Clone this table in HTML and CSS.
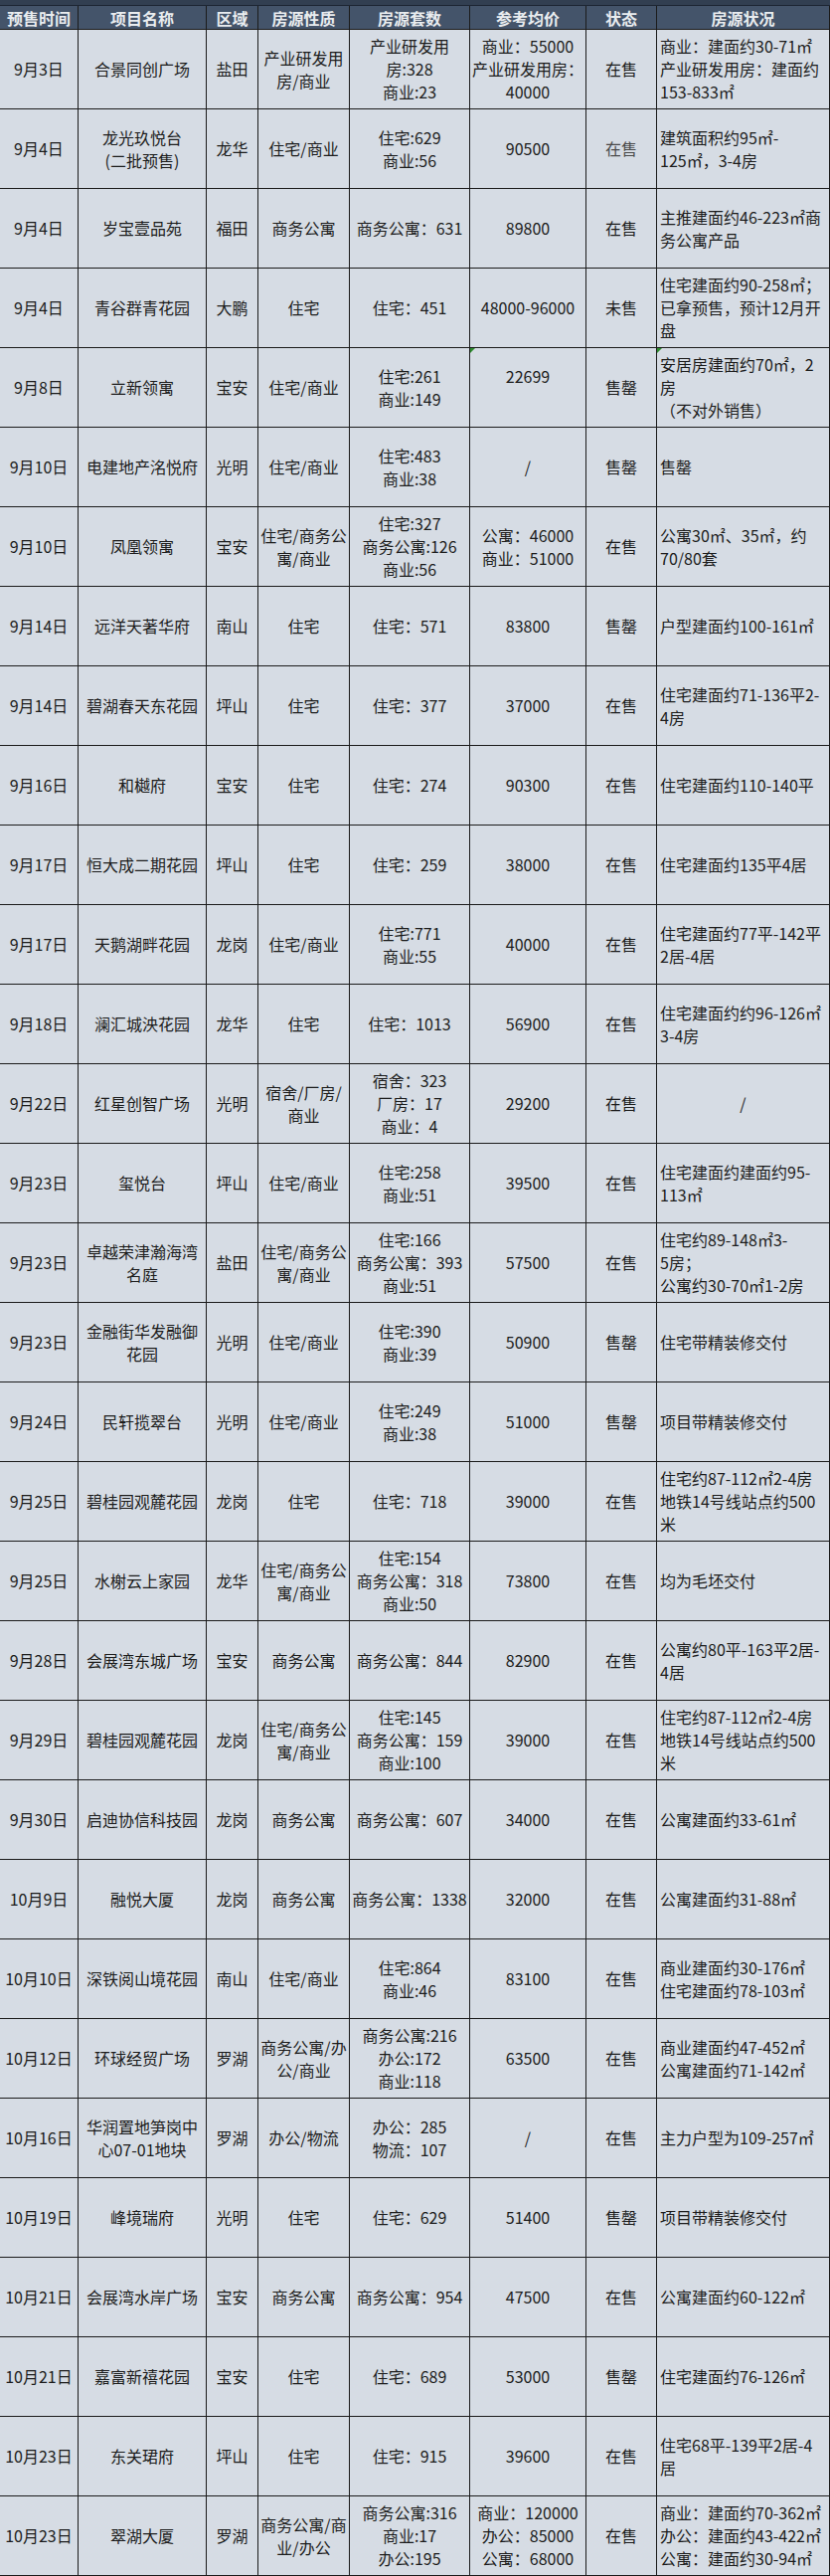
FILE: index.html
```html
<!DOCTYPE html>
<html lang="zh-CN">
<head>
<meta charset="utf-8">
<title>预售项目表</title>
<link rel="stylesheet" href="styles.css">
</head>
<body>
<div class="sheet">
  <div class="band"></div>
  <div class="row head">
    <div class="c">预售时间</div><div class="c">项目名称</div><div class="c">区域</div><div class="c">房源性质</div><div class="c">房源套数</div><div class="c">参考均价</div><div class="c">状态</div><div class="c">房源状况</div>
  </div>

  <div class="row">
    <div class="c">9月3日</div><div class="c">合景同创广场</div><div class="c">盐田</div><div class="c">产业研发用<br>房/商业</div><div class="c">产业研发用<br>房:328<br>商业:23</div><div class="c">商业：55000<br>产业研发用房：<br>40000</div><div class="c">在售</div><div class="c d">商业：建面约30-71㎡<br>产业研发用房：建面约<br>153-833㎡</div>
  </div>
  <div class="row">
    <div class="c">9月4日</div><div class="c">龙光玖悦台<br>(二批预售)</div><div class="c">龙华</div><div class="c">住宅/商业</div><div class="c">住宅:629<br>商业:56</div><div class="c">90500</div><div class="c dim">在售</div><div class="c d">建筑面积约95㎡-<br>125㎡，3-4房</div>
  </div>
  <div class="row">
    <div class="c">9月4日</div><div class="c">岁宝壹品苑</div><div class="c">福田</div><div class="c">商务公寓</div><div class="c">商务公寓：631</div><div class="c">89800</div><div class="c">在售</div><div class="c d">主推建面约46-223㎡商<br>务公寓产品</div>
  </div>
  <div class="row">
    <div class="c">9月4日</div><div class="c">青谷群青花园</div><div class="c">大鹏</div><div class="c">住宅</div><div class="c">住宅：451</div><div class="c">48000-96000</div><div class="c">未售</div><div class="c d">住宅建面约90-258㎡；<br>已拿预售，预计12月开<br>盘</div>
  </div>
  <div class="row">
    <div class="c">9月8日</div><div class="c">立新领寓</div><div class="c">宝安</div><div class="c">住宅/商业</div><div class="c">住宅:261<br>商业:149</div><div class="c mark"><span class="up">22699</span></div><div class="c">售罄</div><div class="c d mark">安居房建面约70㎡，2<br>房<br>（不对外销售）</div>
  </div>
  <div class="row">
    <div class="c">9月10日</div><div class="c">电建地产洺悦府</div><div class="c">光明</div><div class="c">住宅/商业</div><div class="c">住宅:483<br>商业:38</div><div class="c">/</div><div class="c">售罄</div><div class="c d">售罄</div>
  </div>
  <div class="row">
    <div class="c">9月10日</div><div class="c">凤凰领寓</div><div class="c">宝安</div><div class="c">住宅/商务公<br>寓/商业</div><div class="c">住宅:327<br>商务公寓:126<br>商业:56</div><div class="c">公寓：46000<br>商业：51000</div><div class="c">在售</div><div class="c d">公寓30㎡、35㎡，约<br>70/80套</div>
  </div>
  <div class="row">
    <div class="c">9月14日</div><div class="c">远洋天著华府</div><div class="c">南山</div><div class="c">住宅</div><div class="c">住宅：571</div><div class="c">83800</div><div class="c">售罄</div><div class="c d">户型建面约100-161㎡</div>
  </div>
  <div class="row">
    <div class="c">9月14日</div><div class="c">碧湖春天东花园</div><div class="c">坪山</div><div class="c">住宅</div><div class="c">住宅：377</div><div class="c">37000</div><div class="c">在售</div><div class="c d">住宅建面约71-136平2-<br>4房</div>
  </div>
  <div class="row">
    <div class="c">9月16日</div><div class="c">和樾府</div><div class="c">宝安</div><div class="c">住宅</div><div class="c">住宅：274</div><div class="c">90300</div><div class="c">在售</div><div class="c d">住宅建面约110-140平</div>
  </div>
  <div class="row">
    <div class="c">9月17日</div><div class="c">恒大成二期花园</div><div class="c">坪山</div><div class="c">住宅</div><div class="c">住宅：259</div><div class="c">38000</div><div class="c">在售</div><div class="c d">住宅建面约135平4居</div>
  </div>
  <div class="row">
    <div class="c">9月17日</div><div class="c">天鹅湖畔花园</div><div class="c">龙岗</div><div class="c">住宅/商业</div><div class="c">住宅:771<br>商业:55</div><div class="c">40000</div><div class="c">在售</div><div class="c d">住宅建面约77平-142平<br>2居-4居</div>
  </div>
  <div class="row">
    <div class="c">9月18日</div><div class="c">澜汇城泱花园</div><div class="c">龙华</div><div class="c">住宅</div><div class="c">住宅：1013</div><div class="c">56900</div><div class="c">在售</div><div class="c d">住宅建面约约96-126㎡<br>3-4房</div>
  </div>
  <div class="row">
    <div class="c">9月22日</div><div class="c">红星创智广场</div><div class="c">光明</div><div class="c">宿舍/厂房/<br>商业</div><div class="c">宿舍：323<br>厂房：17<br>商业：4</div><div class="c">29200</div><div class="c">在售</div><div class="c">/</div>
  </div>
  <div class="row">
    <div class="c">9月23日</div><div class="c">玺悦台</div><div class="c">坪山</div><div class="c">住宅/商业</div><div class="c">住宅:258<br>商业:51</div><div class="c">39500</div><div class="c">在售</div><div class="c d">住宅建面约建面约95-<br>113㎡</div>
  </div>
  <div class="row">
    <div class="c">9月23日</div><div class="c">卓越荣津瀚海湾<br>名庭</div><div class="c">盐田</div><div class="c">住宅/商务公<br>寓/商业</div><div class="c">住宅:166<br>商务公寓：393<br>商业:51</div><div class="c">57500</div><div class="c">在售</div><div class="c d">住宅约89-148㎡3-<br>5房；<br>公寓约30-70㎡1-2房</div>
  </div>
  <div class="row">
    <div class="c">9月23日</div><div class="c">金融街华发融御<br>花园</div><div class="c">光明</div><div class="c">住宅/商业</div><div class="c">住宅:390<br>商业:39</div><div class="c">50900</div><div class="c">售罄</div><div class="c d">住宅带精装修交付</div>
  </div>
  <div class="row">
    <div class="c">9月24日</div><div class="c">民轩揽翠台</div><div class="c">光明</div><div class="c">住宅/商业</div><div class="c">住宅:249<br>商业:38</div><div class="c">51000</div><div class="c">售罄</div><div class="c d">项目带精装修交付</div>
  </div>
  <div class="row">
    <div class="c">9月25日</div><div class="c">碧桂园观麓花园</div><div class="c">龙岗</div><div class="c">住宅</div><div class="c">住宅：718</div><div class="c">39000</div><div class="c">在售</div><div class="c d">住宅约87-112㎡2-4房<br>地铁14号线站点约500<br>米</div>
  </div>
  <div class="row">
    <div class="c">9月25日</div><div class="c">水榭云上家园</div><div class="c">龙华</div><div class="c">住宅/商务公<br>寓/商业</div><div class="c">住宅:154<br>商务公寓：318<br>商业:50</div><div class="c">73800</div><div class="c">在售</div><div class="c d">均为毛坯交付</div>
  </div>
  <div class="row">
    <div class="c">9月28日</div><div class="c">会展湾东城广场</div><div class="c">宝安</div><div class="c">商务公寓</div><div class="c">商务公寓：844</div><div class="c">82900</div><div class="c">在售</div><div class="c d">公寓约80平-163平2居-<br>4居</div>
  </div>
  <div class="row">
    <div class="c">9月29日</div><div class="c">碧桂园观麓花园</div><div class="c">龙岗</div><div class="c">住宅/商务公<br>寓/商业</div><div class="c">住宅:145<br>商务公寓：159<br>商业:100</div><div class="c">39000</div><div class="c">在售</div><div class="c d">住宅约87-112㎡2-4房<br>地铁14号线站点约500<br>米</div>
  </div>
  <div class="row">
    <div class="c">9月30日</div><div class="c">启迪协信科技园</div><div class="c">龙岗</div><div class="c">商务公寓</div><div class="c">商务公寓：607</div><div class="c">34000</div><div class="c">在售</div><div class="c d">公寓建面约33-61㎡</div>
  </div>
  <div class="row">
    <div class="c">10月9日</div><div class="c">融悦大厦</div><div class="c">龙岗</div><div class="c">商务公寓</div><div class="c">商务公寓：1338</div><div class="c">32000</div><div class="c">在售</div><div class="c d">公寓建面约31-88㎡</div>
  </div>
  <div class="row">
    <div class="c">10月10日</div><div class="c">深铁阅山境花园</div><div class="c">南山</div><div class="c">住宅/商业</div><div class="c">住宅:864<br>商业:46</div><div class="c">83100</div><div class="c">在售</div><div class="c d">商业建面约30-176㎡<br>住宅建面约78-103㎡</div>
  </div>
  <div class="row">
    <div class="c">10月12日</div><div class="c">环球经贸广场</div><div class="c">罗湖</div><div class="c">商务公寓/办<br>公/商业</div><div class="c">商务公寓:216<br>办公:172<br>商业:118</div><div class="c">63500</div><div class="c">在售</div><div class="c d">商业建面约47-452㎡<br>公寓建面约71-142㎡</div>
  </div>
  <div class="row">
    <div class="c">10月16日</div><div class="c">华润置地笋岗中<br>心07-01地块</div><div class="c">罗湖</div><div class="c">办公/物流</div><div class="c">办公：285<br>物流：107</div><div class="c">/</div><div class="c">在售</div><div class="c d">主力户型为109-257㎡</div>
  </div>
  <div class="row">
    <div class="c">10月19日</div><div class="c">峰境瑞府</div><div class="c">光明</div><div class="c">住宅</div><div class="c">住宅：629</div><div class="c">51400</div><div class="c">售罄</div><div class="c d">项目带精装修交付</div>
  </div>
  <div class="row">
    <div class="c">10月21日</div><div class="c">会展湾水岸广场</div><div class="c">宝安</div><div class="c">商务公寓</div><div class="c">商务公寓：954</div><div class="c">47500</div><div class="c">在售</div><div class="c d">公寓建面约60-122㎡</div>
  </div>
  <div class="row">
    <div class="c">10月21日</div><div class="c">嘉富新禧花园</div><div class="c">宝安</div><div class="c">住宅</div><div class="c">住宅：689</div><div class="c">53000</div><div class="c">售罄</div><div class="c d">住宅建面约76-126㎡</div>
  </div>
  <div class="row">
    <div class="c">10月23日</div><div class="c">东关珺府</div><div class="c">坪山</div><div class="c">住宅</div><div class="c">住宅：915</div><div class="c">39600</div><div class="c">在售</div><div class="c d">住宅68平-139平2居-4<br>居</div>
  </div>
  <div class="row">
    <div class="c">10月23日</div><div class="c">翠湖大厦</div><div class="c">罗湖</div><div class="c">商务公寓/商<br>业/办公</div><div class="c">商务公寓:316<br>商业:17<br>办公:195</div><div class="c">商业：120000<br>办公：85000<br>公寓：68000</div><div class="c">在售</div><div class="c d">商业：建面约70-362㎡<br>办公：建面约43-422㎡<br>公寓：建面约30-94㎡</div>
  </div>
</div>
</body>
</html>
```

FILE: styles.css
```css
html, body {
  margin: 0;
  padding: 0;
  background: #d6dce4;
}

.sheet {
  width: 835px;
  font-family: "Noto Sans CJK SC", "Microsoft YaHei", "Noto Sans", sans-serif;
  font-size: 16px;
  line-height: 23px;
  color: #1c1c1c;
  background: #d6dce4;
}

.band {
  height: 5px;
  background: #323f51;
  border-bottom: 1px solid #1d2633;
}

.row {
  display: grid;
  grid-template-columns: 79px 129px 52px 92px 121px 117px 71px 174px;
  height: 80px;
  box-sizing: border-box;
  border-bottom: 1px solid #1b1b1b;
}

.row.head {
  height: 24px;
  background: #44546a;
  color: #e9ecef;
  font-weight: 700;
  line-height: 22px;
  border-bottom: 1px solid #1b1b1b;
}

.c {
  position: relative;
  display: flex;
  align-items: center;
  justify-content: center;
  text-align: center;
  white-space: nowrap;
  box-sizing: border-box;
  border-right: 1px solid #1b1b1b;
  overflow: hidden;
}

.c.d {
  justify-content: flex-start;
  text-align: left;
  padding-left: 3px;
}

.dim {
  color: #4a4a4a;
}

.up {
  margin-bottom: 23px;
}

.mark::before {
  content: "";
  position: absolute;
  left: 0;
  top: 0;
  width: 0;
  height: 0;
  border-top: 5px solid #2e8b2e;
  border-right: 5px solid transparent;
}
```
